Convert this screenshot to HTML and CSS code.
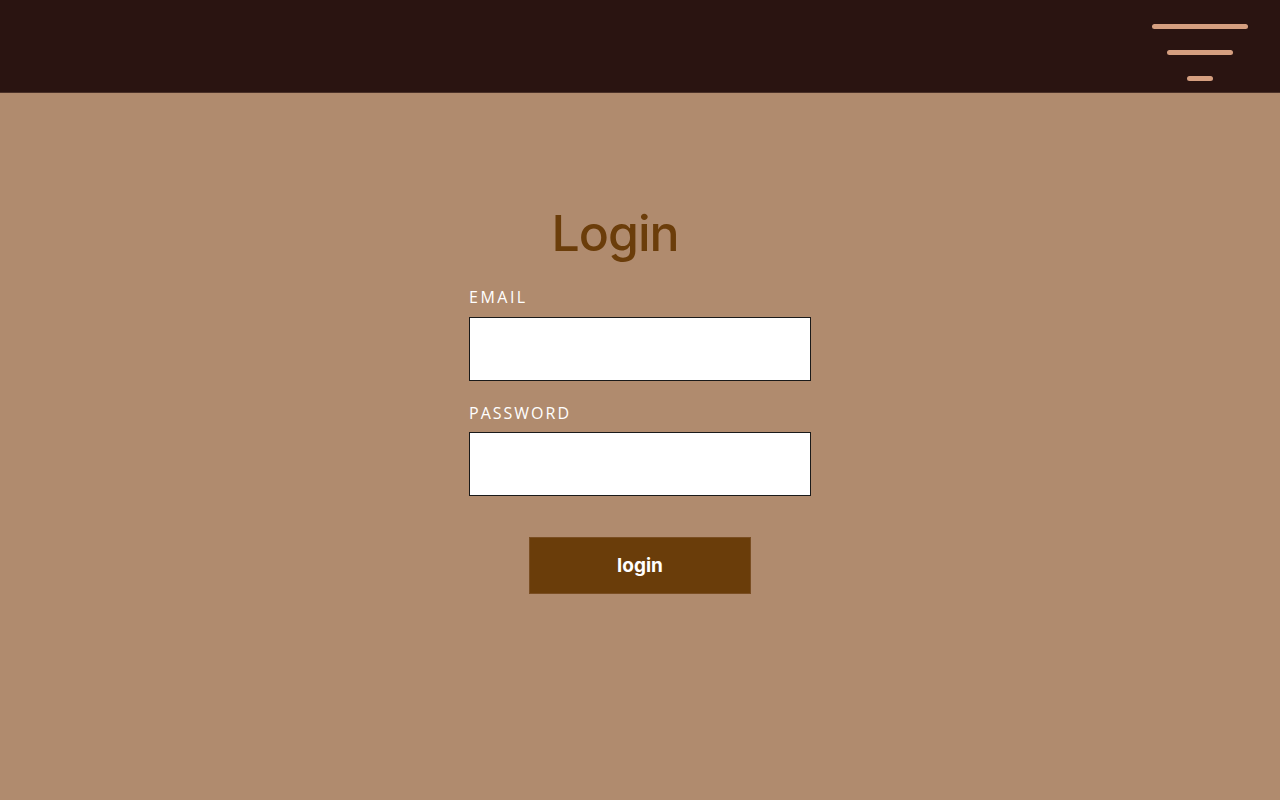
FILE: index.html
```html
<!DOCTYPE html>
<html lang="en">
<head>
<meta charset="utf-8">
<title>Login</title>
<link rel="stylesheet" href="styles.css">
</head>
<body>
<header class="topbar">
  <button class="menu" aria-label="Menu">
    <span class="bar bar-1"></span>
    <span class="bar bar-2"></span>
    <span class="bar bar-3"></span>
  </button>
</header>
<main class="page">
  <form class="login-form">
    <h1 class="title">Login</h1>
    <label class="label" for="email">EMAIL</label>
    <input class="field" id="email" type="email">
    <label class="label label-pw" for="password">PASSWORD</label>
    <input class="field" id="password" type="password">
    <button class="submit" type="button">login</button>
  </form>
</main>
</body>
</html>
```
FILE: styles.css
```css
* { box-sizing: border-box; }
html, body { margin: 0; padding: 0; }
body {
  background: #b08b6e;
  font-family: "Inter", "DejaVu Sans", sans-serif;
  min-height: 800px;
}
.topbar {
  height: 93px;
  background: #2a1411;
  border-bottom: 1px solid #4a3128;
  display: flex;
  justify-content: flex-end;
  align-items: flex-start;
  padding: 24px 32px 0 0;
}
.menu {
  background: none;
  border: 0;
  padding: 0;
  width: 96px;
  display: flex;
  flex-direction: column;
  align-items: center;
  gap: 21px;
  cursor: pointer;
}
.bar {
  display: block;
  height: 5px;
  border-radius: 3px;
  background: #d59f80;
}
.bar-1 { width: 96px; }
.bar-2 { width: 66px; }
.bar-3 { width: 26px; }
.page {
  display: flex;
  justify-content: center;
  padding-top: 110px;
}
.login-form {
  width: 342px;
  display: flex;
  flex-direction: column;
}
.title {
  margin: 0 0 24px 0;
  padding-right: 50px;
  text-align: center;
  font-family: "Inter", sans-serif;
  font-weight: 500;
  font-size: 50px;
  line-height: 60px;
  letter-spacing: -1px;
  color: #6b3d0a;
}
.label {
  color: #ffffff;
  font-family: "Open Sans", sans-serif;
  font-size: 16px;
  letter-spacing: 2.5px;
  line-height: 20px;
  margin-bottom: 10px;
}
.label-pw { margin-top: 22px; margin-bottom: 9px; letter-spacing: 2px; }
.field {
  width: 342px;
  height: 64px;
  background: #ffffff;
  border: 1px solid #1a1a1a;
  margin: 0;
  padding: 0 12px;
  font-size: 16px;
}
.submit {
  align-self: center;
  margin-top: 41px;
  width: 222px;
  height: 57px;
  background: #6a3d0a;
  border: 1px solid #7a4e22;
  color: #ffffff;
  font-family: "Inter", sans-serif;
  font-weight: 700;
  font-size: 19px;
  cursor: pointer;
}
```
